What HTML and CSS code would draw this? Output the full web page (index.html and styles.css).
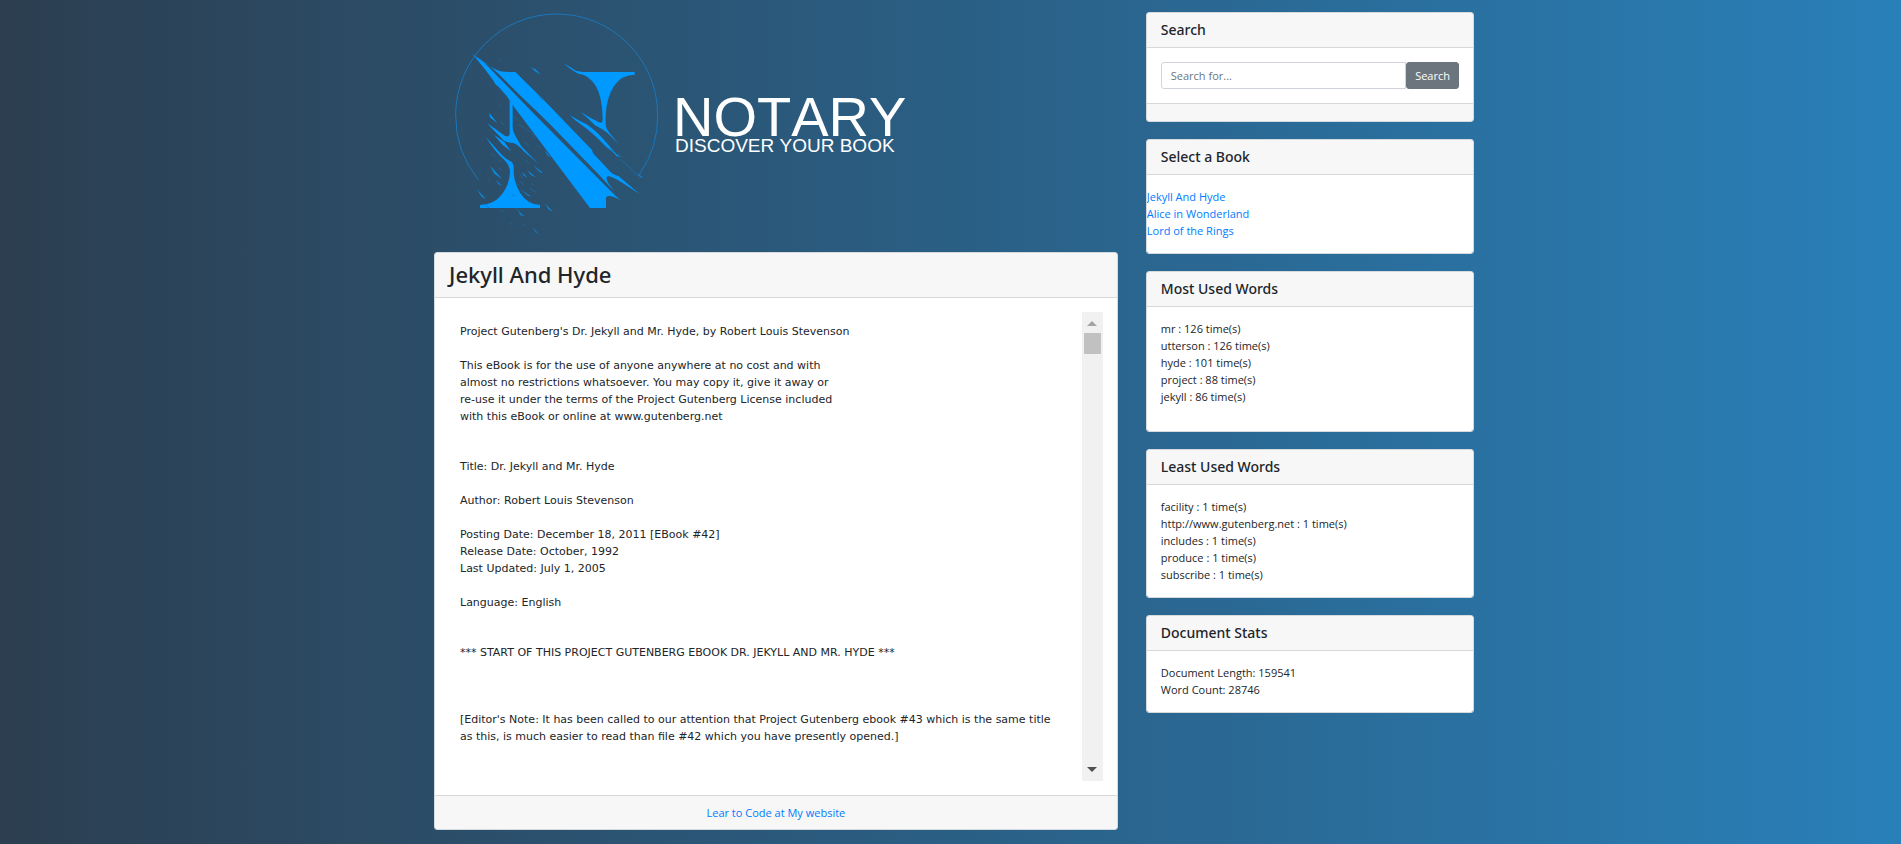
FILE: index.html
```html
<!DOCTYPE html>
<html lang="en">
<head>
<meta charset="utf-8">
<title>Notary</title>
<link rel="stylesheet" href="styles.css">
</head>
<body>
<div class="page">
  <main class="main">
    <header class="logo">
      <svg class="mark" viewBox="12 0 708 756" aria-hidden="true">
        <path class="ring" d="M145 539A303 303 0 0 1 77 345A303 303 0 0 1 683 345A303 303 0 0 1 629 522"/>
        <g class="solid">
          <path d="M121 159L150 181Q190 208 212 214Q222 216 256 216L345 304L486 450L489 460L544 518Q553 524 566 529L629 582L578 549Q552 532 535 528Q525 530 534 548L552 573L504 521L363 376L334 347L273 289L207 223Q170 188 121 159Z"/>
          <path d="M133 169Q165 188 188 214L266 294L328 358L551 582L571 600Q548 587 536 588Q528 588 528 596V624H480L245 311L230 288L207 262Q193 252 189 240Q165 207 133 169Z"/>
          <path d="M401 190Q420 201 434 210Q446 216 470 216H614V224Q575 224 552 258Q530 292 527 345V372Q527 386 541 402L566 432Q548 414 530 397Q515 386 495 376Q475 354 451 335Q482 355 510 368Q518 370 518 357Q517 290 497 257Q476 225 448 222Q432 217 401 190Z"/>
          <path d="M419 345Q450 364 472 374Q505 397 531 430L566 470L529 441Q490 399 450 371Q431 359 419 345Z"/>
          <path d="M239 304L248 312V385Q249 397 258 411L274 439L325 491L280 452Q265 434 249 429Q235 428 222 422Q201 401 171 370Q198 388 218 403Q234 416 239 403Z"/>
          <path d="M177 338L202 369L181 353ZM192 404L223 426L243 454L218 435ZM168 412L205 453Q225 477 239 482Q251 486 251 504V518Q253 547 270 578Q292 613 330 615V624H150V615Q192 615 216 583Q239 553 240 514Q238 495 224 481Q195 456 168 412Z"/>
        </g>
        <g class="flecks">
          <path d="M302 202L317 208L333 224L318 216ZM180 497L207 526L215 537L193 521ZM140 567L168 597L155 590ZM309 496L340 519L330 517ZM269 566L302 589L295 588ZM307 681L329 705L315 694ZM346 611L369 635L355 628ZM264 634L284 649L272 646ZM620 517L641 535L629 530ZM277 515L292 534L280 526ZM291 510L318 532L303 526ZM198 540L216 557L205 552Z"/>
          <path d="M323 283l20 20l-12-7ZM530 438l22 15l-10-1ZM550 456l22 14l-13-1ZM345 450l18 24l-12-9Z"/>
        </g>
        <path class="dashes" d="M206 176l6 4M231 201l3 2M210 313l5 4M252 350l12 12M265 372l18 12M290 388l14 10M307 402l10 10M283 428l14 10M322 436l8 7M213 365l10 12M184 459l12 10M205 478l9 9M206 503l10 10M286 480l12 10M270 523l9 12M268 542l14 12M300 567l18 10M304 550l8 6M245 583l10 6M258 626l14 12M165 612l14 14M210 628l10 8M240 670l8 4M281 672l6 3M148 510l5 3M121 326l3 2M84 556l3 2M175 540l5 4M260 550l7 5M569 478l13 9M579 486l17 12M592 498l15 10M604 510l12 9M612 520l12 8M562 463l14 8M540 449l12 7"/>
      </svg>
      <div class="wordmark">
        <div class="name">NOTARY</div>
        <div class="tagline">DISCOVER YOUR BOOK</div>
      </div>
    </header>
    <article class="card">
      <h2 class="card-header title">Jekyll And Hyde</h2>
      <div class="card-body">
        <div class="reader">
          <div class="book">
            <p>Project Gutenberg's Dr. Jekyll and Mr. Hyde, by Robert Louis Stevenson</p>
            <p>This eBook is for the use of anyone anywhere at no cost and with<br>almost no restrictions whatsoever. You may copy it, give it away or<br>re-use it under the terms of the Project Gutenberg License included<br>with this eBook or online at www.gutenberg.net</p>
            <p class="section">Title: Dr. Jekyll and Mr. Hyde</p>
            <p>Author: Robert Louis Stevenson</p>
            <p>Posting Date: December 18, 2011 [EBook #42]<br>Release Date: October, 1992<br>Last Updated: July 1, 2005</p>
            <p>Language: English</p>
            <p class="section">*** START OF THIS PROJECT GUTENBERG EBOOK DR. JEKYLL AND MR. HYDE ***</p>
            <p class="chapter">[Editor's Note: It has been called to our attention that Project Gutenberg ebook #43 which is the same title<br>as this, is much easier to read than file #42 which you have presently opened.]</p>
          </div>
          <div class="scrollbar" aria-hidden="true">
            <span class="arrow up"></span>
            <span class="thumb"></span>
            <span class="arrow down"></span>
          </div>
        </div>
      </div>
      <div class="card-footer"><a href="#">Lear to Code at My website</a></div>
    </article>
  </main>
  <aside class="side">
    <section class="card">
      <h5 class="card-header"><label for="keyword">Search</label></h5>
      <form class="card-body search">
        <input id="keyword" type="text" placeholder="Search for...">
        <button type="button">Search</button>
      </form>
      <div class="card-footer empty"></div>
    </section>
    <section class="card">
      <h5 class="card-header">Select a Book</h5>
      <ul class="list books">
        <li><a href="#">Jekyll And Hyde</a></li>
        <li><a href="#">Alice in Wonderland</a></li>
        <li><a href="#">Lord of the Rings</a></li>
      </ul>
    </section>
    <section class="card">
      <h5 class="card-header">Most Used Words</h5>
      <ul class="list most">
        <li>mr : 126 time(s)</li>
        <li>utterson : 126 time(s)</li>
        <li>hyde : 101 time(s)</li>
        <li>project : 88 time(s)</li>
        <li>jekyll : 86 time(s)</li>
      </ul>
    </section>
    <section class="card">
      <h5 class="card-header">Least Used Words</h5>
      <ul class="list">
        <li>facility : 1 time(s)</li>
        <li>http://www.gutenberg.net : 1 time(s)</li>
        <li>includes : 1 time(s)</li>
        <li>produce : 1 time(s)</li>
        <li>subscribe : 1 time(s)</li>
      </ul>
    </section>
    <section class="card">
      <h5 class="card-header">Document Stats</h5>
      <ul class="list">
        <li>Document Length: 159541</li>
        <li>Word Count: 28746</li>
      </ul>
    </section>
  </aside>
</div>
</body>
</html>
```
FILE: styles.css
```css
* { box-sizing: border-box; }
html { min-height: 100%; background: linear-gradient(to right, #2c3e50, #2980b9); }
body { margin: 0; color: #212529; font: 11px/17px "Open Sans", "Segoe UI", sans-serif; }
a { color: #007bff; text-decoration: none; }

.page {
  display: grid;
  grid-template-columns: minmax(0, 25fr) minmax(0, 12fr);
  gap: 28px;
  align-items: start;
  max-width: 1047px;
  margin: 0 auto;
  padding-left: 7px;
}

.logo { display: flex; align-items: center; gap: 3px; height: 252px; }
.mark { width: 236px; height: 252px; flex: none; }
.ring { fill: none; stroke: #1b76b9; stroke-width: 3; }
.solid { fill: #0099ff; }
.flecks { fill: #0d87db; }
.dashes { stroke: #166fae; stroke-width: 2; fill: none; }
.wordmark { color: #fff; font-family: "Liberation Sans", Arial, sans-serif; font-kerning: none; white-space: nowrap; }
.name { font-size: 56px; line-height: 40px; }
.tagline { padding-left: 2px; font-size: 19px; line-height: 18px; }

.card {
  background: #fff;
  background-clip: padding-box;
  border: 1px solid #d5dade;
  border-radius: 3px;
  overflow: hidden;
}
.card-header {
  margin: 0;
  padding: 8px 14px 9px;
  border-bottom: 1px solid #d8d8d8;
  background: #f7f7f7;
  font-family: "Noto Sans", "Segoe UI", sans-serif;
  font-size: 14px;
  line-height: 17px;
  font-weight: 500;
}
.title { padding: 7px 14px 9px; font-size: 22px; line-height: 28px; }
.card-body { padding: 14px; }
.card-footer {
  padding: 8px 14px;
  border-top: 1px solid #d8d8d8;
  background: #f7f7f7;
  text-align: center;
}
.empty { height: 18px; padding: 0; }

.reader { display: flex; height: 469px; }
.book { flex: 1; min-width: 0; padding: 11px; overflow: hidden; font-family: "DejaVu Sans", Verdana, sans-serif; white-space: nowrap; }
.book p { margin: 0 0 17px; }
.book .section { margin-top: 33px; }
.book .chapter { margin-top: 50px; }
.scrollbar { display: flex; flex-direction: column; align-items: center; width: 21px; flex: none; padding: 9px 0; background: #f1f1f1; }
.arrow { border: 5px solid transparent; }
.up { border-top: 0; border-bottom-color: #a3a3a3; }
.down { border-bottom: 0; border-top-color: #505050; margin-top: auto; }
.thumb { width: 17px; height: 21px; margin-top: 7px; background: #c1c1c1; }

.side { display: grid; gap: 17px; padding-top: 12px; }
.search { display: flex; }
.search input {
  flex: 1;
  min-width: 0;
  height: 27px;
  padding: 0 9px;
  border: 1px solid #ced4da;
  border-radius: 3px 0 0 3px;
  color: #495057;
  font: inherit;
}
.search input::placeholder { color: #6c757d; opacity: 1; }
.search button {
  height: 27px;
  padding: 0 8px;
  border: 1px solid #6c757d;
  border-radius: 3px;
  background: #6c757d;
  color: #fff;
  font: inherit;
}
.list { margin: 0; padding: 13px 14px 14px; list-style: none; }
.books { padding-left: 0; }
.most { padding-bottom: 26px; }
```
